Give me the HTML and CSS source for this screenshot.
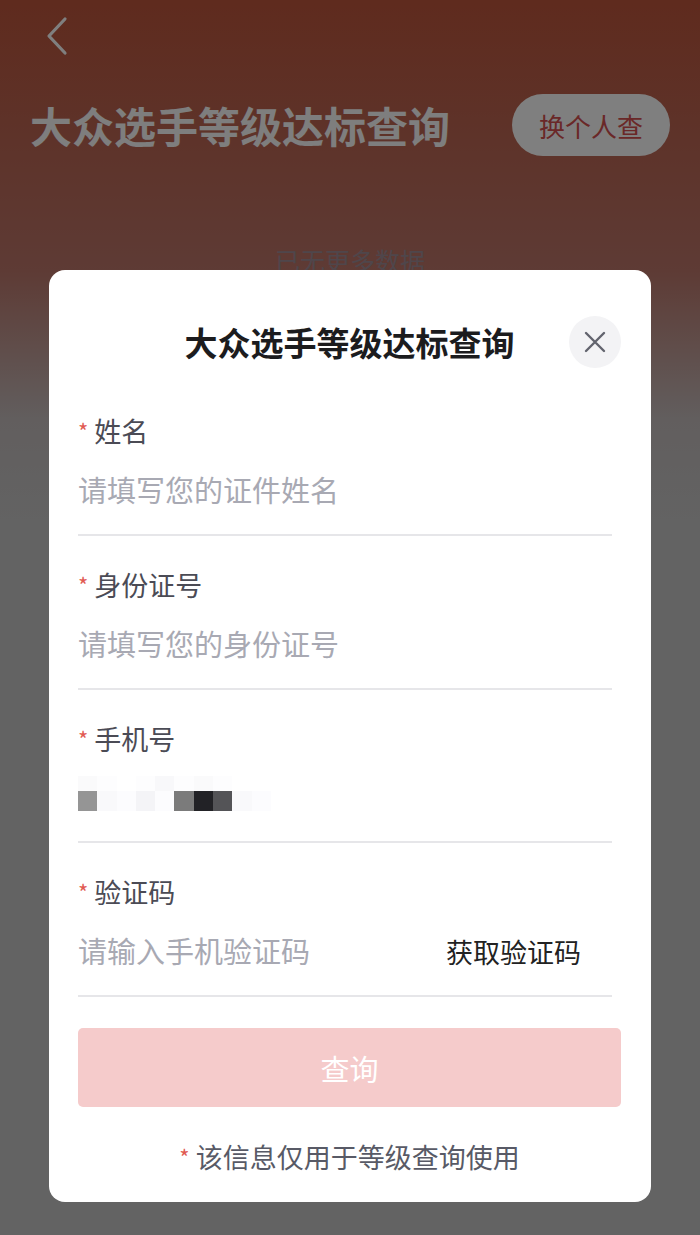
FILE: index.html
```html
<!DOCTYPE html>
<html lang="zh-CN">
<head>
    <meta charset="UTF-8">
    <meta name="viewport" content="width=device-width, initial-scale=1.0">
    <title>大众选手等级达标查询</title>
    <link rel="stylesheet" href="styles.css">
</head>
<body>

    <!-- Page behind the dialog -->
    <div class="nav">
        <svg class="back" width="24" height="40" viewBox="0 0 24 40">
            <path d="M20 3 L4 20 L20 37" fill="none" stroke="#fff" stroke-width="3.2" stroke-linecap="round" stroke-linejoin="round"/>
        </svg>
    </div>
    <div class="hero">
        <h1 class="hero-title">大众选手等级达标查询</h1>
        <button class="switch-btn">换个人查</button>
    </div>
    <p class="empty-tip">已无更多数据</p>

    <!-- Query dialog -->
    <div class="mask">
        <div class="dialog">
            <div class="dialog-head">
                <span></span>
                <h2>大众选手等级达标查询</h2>
                <button class="close-btn">
                    <svg width="22" height="22" viewBox="0 0 22 22">
                        <path d="M2 2 L20 20 M20 2 L2 20" stroke="#62646e" stroke-width="2.4" stroke-linecap="round"/>
                    </svg>
                </button>
            </div>

            <div class="fields">
                <div class="field">
                    <label><span class="req">*</span>姓名</label>
                    <input type="text" placeholder="请填写您的证件姓名">
                </div>
                <div class="field">
                    <label><span class="req">*</span>身份证号</label>
                    <input type="text" placeholder="请填写您的身份证号">
                </div>
                <div class="field">
                    <label><span class="req">*</span>手机号</label>
                    <div class="mosaic">
                        <div class="mosaic-row top">
                            <i class="m1"></i><i class="m2"></i><i class="m3"></i><i class="m2"></i><i class="m4"></i><i class="m2"></i><i class="m1"></i><i class="m2"></i>
                        </div>
                        <div class="mosaic-row">
                            <i class="g1"></i><i class="w1"></i><i class="w2"></i><i class="w3"></i><i class="w2"></i><i class="g2"></i><i class="g3"></i><i class="g4"></i><i class="w1"></i><i class="w2"></i>
                        </div>
                    </div>
                </div>
                <div class="field">
                    <label><span class="req">*</span>验证码</label>
                    <div class="code-row">
                        <input type="text" placeholder="请输入手机验证码">
                        <span class="get-code">获取验证码</span>
                    </div>
                </div>
            </div>

            <button class="submit-btn" disabled>查询</button>
            <p class="note"><span class="req">*</span>该信息仅用于等级查询使用</p>
        </div>
    </div>

</body>
</html>
```

FILE: styles.css
```css
* {
    box-sizing: border-box;
}

body {
    margin: 0;
    min-height: 100vh;
    font-family: "Noto Sans CJK SC", "Noto Sans", sans-serif;
    background: linear-gradient(180deg, #be563c 0px, #bc766a 270px, #c4bdbd 420px, #c6c6c6 520px, #c6c6c6 100%);
}

.nav {
    height: 72px;
    padding-left: 45px;
    display: flex;
    align-items: center;
}

.hero {
    display: flex;
    justify-content: space-between;
    align-items: center;
    padding: 22px 30px 0 30px;
}
.hero-title {
    margin: 0;
    font-size: 42px;
    line-height: 56px;
    font-weight: 700;
    color: #fcfcfc;
}
.switch-btn {
    height: 62px;
    padding: 0 27px;
    border: none;
    border-radius: 31px;
    background: #ffffff;
    color: #d45050;
    font-family: inherit;
    font-size: 26px;
}

.empty-tip {
    margin: 87px 0 0;
    text-align: center;
    font-size: 25px;
    line-height: 34px;
    color: #9e8c96;
}

/* dialog */
.mask {
    position: fixed;
    inset: 0;
    background: rgba(0, 0, 0, 0.5);
    display: flex;
    justify-content: center;
    align-items: flex-end;
    padding-bottom: 33px;
}
.dialog {
    width: 602px;
    background: #fff;
    border-radius: 16px;
    padding: 46px 30px 27px 29px;
}
.dialog-head {
    display: grid;
    grid-template-columns: 1fr auto 1fr;
    align-items: center;
}
.dialog-head h2 {
    margin: 0;
    font-size: 33px;
    line-height: 44px;
    font-weight: 700;
    color: #1c1c1e;
}
.close-btn {
    justify-self: end;
    width: 52px;
    height: 52px;
    border: none;
    border-radius: 50%;
    background: #f3f3f5;
    display: flex;
    align-items: center;
    justify-content: center;
    padding: 0;
}

.fields {
    margin: 14px 9px 0 0;
}
.field {
    padding: 31px 0 25px;
    border-bottom: 2px solid #e6e6e9;
}
.field label {
    display: block;
    height: 36px;
    font-size: 27px;
    line-height: 36px;
    color: #4b4b55;
}
.req {
    color: #e15a52;
    font-size: 22px;
    line-height: 1;
    margin-right: 6px;
    vertical-align: 2px;
}
.field input {
    display: block;
    width: 100%;
    margin-top: 20px;
    height: 40px;
    padding: 0;
    border: none;
    outline: none;
    font-family: inherit;
    font-size: 29px;
    color: #333;
    background: transparent;
}
.field input::placeholder {
    color: #a8a9b3;
}

.mosaic {
    margin-top: 19px;
    height: 40px;
}
.mosaic-row {
    display: flex;
}
.mosaic-row i {
    display: block;
    width: 19.3px;
    height: 20px;
}
.mosaic-row.top i {
    height: 15px;
}
.m1 { background: #fafafb; }
.m2 { background: #fdfdfe; }
.m3 { background: #ffffff; }
.m4 { background: #f8f8fa; }
.g1 { background: #959595; }
.g2 { background: #7b7b7b; }
.g3 { background: #222226; }
.g4 { background: #545457; }
.w1 { background: #f9f9fb; }
.w2 { background: #fcfcfe; }
.w3 { background: #f4f4f7; }

.code-row {
    display: flex;
    align-items: center;
}
.code-row input {
    flex: 1;
}
.get-code {
    margin: 24px 31px 0 0;
    font-size: 27px;
    line-height: 36px;
    color: #222;
}

.submit-btn {
    display: block;
    width: 100%;
    height: 79px;
    margin-top: 31px;
    border: none;
    border-radius: 5px;
    background: #f5cbcb;
    color: #fff;
    font-family: inherit;
    font-size: 29px;
}

.note {
    margin: 32px 0 0;
    height: 36px;
    text-align: center;
    font-size: 27px;
    line-height: 36px;
    color: #585a66;
}
```
